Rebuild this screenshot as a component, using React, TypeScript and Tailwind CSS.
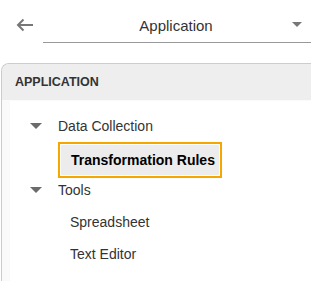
import React from 'react';

const Caret = ({ className = '' }: { className?: string }) => (
  <svg width="12" height="6" viewBox="0 0 12 6" className={className}>
    <path d="M0 0 H12 L6 6 Z" fill="#6b6b6b" />
  </svg>
);

export default function App() {
  return (
    <div className="w-[311px] h-[281px] bg-white overflow-hidden text-[#333] font-['Liberation_Sans',Arial,sans-serif]">
      {/* Top bar */}
      <div className="h-[63px] flex items-start pt-[13px]">
        <button className="w-[43px] h-[24px] flex items-center justify-center pl-[6px] cursor-pointer">
          <svg width="18" height="14" viewBox="0 0 18 14">
            <path d="M17 7 H2 M7.5 1.5 L2 7 L7.5 12.5" stroke="#777" strokeWidth="2" fill="none" />
          </svg>
        </button>
        <div className="flex-1 h-[30px] border-b border-[#999] flex items-center relative">
          <span className="flex-1 text-center text-[15px] text-[#333] pr-[2px] -mt-[2px]">Application</span>
          <svg width="10" height="5" viewBox="0 0 10 5" className="absolute right-[9px] top-[9px]">
            <path d="M0 0 H10 L5 5 Z" fill="#777" />
          </svg>
        </div>
      </div>

      {/* Panel */}
      <div className="ml-[1px] h-[218px] border-l border-t border-[#ccc] rounded-tl-[8px] bg-[#fafafa] flex flex-col">
        <div className="h-[36px] bg-[#eeeeee] rounded-tl-[8px] flex items-center pl-[13px] text-[12.5px] font-bold text-[#333]">
          APPLICATION
        </div>
        <div className="flex-1 ml-[8px] mt-[1px] bg-white pt-[10px] text-[14px]">
          <div className="h-[30px] flex items-center">
            <Caret className="ml-[20px]" />
            <span className="ml-[16px]">Data Collection</span>
          </div>
          <div className="mt-[1px] ml-[48px] w-[164px] h-[36px] border-[2px] border-[#f5a700] p-[1px]">
            <div className="h-full bg-[#ececec] flex items-center pl-[10px] font-bold text-black">
              Transformation Rules
            </div>
          </div>
          <div className="h-[24px] flex items-center">
            <Caret className="ml-[20px]" />
            <span className="ml-[16px]">Tools</span>
          </div>
          <div className="mt-[4px] h-[32px] flex items-center pl-[60px]">Spreadsheet</div>
          <div className="h-[32px] flex items-center pl-[60px]">Text Editor</div>
        </div>
      </div>
    </div>
  );
}
